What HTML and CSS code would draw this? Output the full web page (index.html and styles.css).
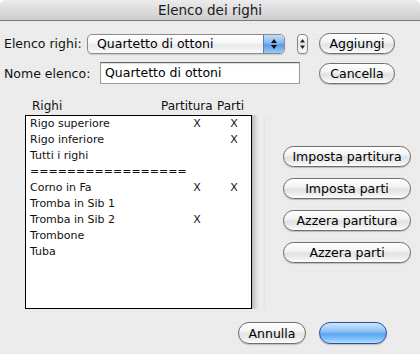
FILE: index.html
```html
<!DOCTYPE html>
<html>
<head>
<meta charset="utf-8">
<link rel="stylesheet" href="styles.css">
</head>
<body>
<div class="window">
  <div class="titlebar">Elenco dei righi</div>
  <div class="content">
    <div class="row row1">
      <span class="label label1">Elenco righi:</span>
      <div class="popup">
        <span class="popup-text">Quartetto di ottoni</span>
        <span class="popup-arrows">
          <svg width="8" height="12" viewBox="0 0 8 12"><path d="M4 1 L7 5 L1 5 Z M1 7 L7 7 L4 11 Z" fill="#111"/></svg>
        </span>
      </div>
      <div class="stepper">
        <svg width="7" height="14" viewBox="0 0 7 14"><path d="M3.5 2 L6 5.5 L1 5.5 Z M1 8.5 L6 8.5 L3.5 12 Z" fill="#222"/></svg>
      </div>
      <button class="btn btn-top">Aggiungi</button>
    </div>
    <div class="row row2">
      <span class="label label2">Nome elenco:</span>
      <div class="textfield">Quartetto di ottoni</div>
      <button class="btn btn-top">Cancella</button>
    </div>
    <div class="middle">
      <div class="listcol">
        <div class="listhead">
          <span class="h-name">Righi</span>
          <span class="h-part">Partitura</span>
          <span class="h-parti">Parti</span>
        </div>
        <div class="listwrap">
          <div class="listbox">
            <div class="lrow"><span>Rigo superiore</span><span class="c">X</span><span class="c c2">X</span></div>
            <div class="lrow"><span>Rigo inferiore</span><span class="c"></span><span class="c c2">X</span></div>
            <div class="lrow"><span>Tutti i righi</span><span class="c"></span><span class="c c2"></span></div>
            <div class="lrow"><span>=================</span><span class="c"></span><span class="c c2"></span></div>
            <div class="lrow"><span>Corno in Fa</span><span class="c">X</span><span class="c c2">X</span></div>
            <div class="lrow"><span>Tromba in Sib 1</span><span class="c"></span><span class="c c2"></span></div>
            <div class="lrow"><span>Tromba in Sib 2</span><span class="c">X</span><span class="c c2"></span></div>
            <div class="lrow"><span>Trombone</span><span class="c"></span><span class="c c2"></span></div>
            <div class="lrow"><span>Tuba</span><span class="c"></span><span class="c c2"></span></div>
          </div>
          <div class="track"></div>
        </div>
      </div>
      <div class="sidebtns">
        <button class="btn btn-side">Imposta partitura</button>
        <button class="btn btn-side">Imposta parti</button>
        <button class="btn btn-side">Azzera partitura</button>
        <button class="btn btn-side">Azzera parti</button>
      </div>
    </div>
    <div class="bottom">
      <button class="btn btn-bottom">Annulla</button>
      <button class="btn btn-bottom btn-default"></button>
    </div>
  </div>
</div>
</body>
</html>
```
FILE: styles.css
```css
html, body {
  margin: 0;
  padding: 0;
  background: #ffffff;
}
body {
  width: 420px;
  height: 354px;
  overflow: hidden;
  font-family: "DejaVu Sans", "Liberation Sans", sans-serif;
  color: #000;
}
.window {
  width: 420px;
  height: 354px;
  background-color: #ececec;
  background-image: repeating-linear-gradient(to bottom, #eeeeee 0, #eeeeee 1px, #e9e9e9 1px, #e9e9e9 2px);
  border-radius: 6px 6px 0 0;
  overflow: hidden;
}
.titlebar {
  height: 21px;
  box-sizing: border-box;
  border-bottom: 1px solid #7a7a7a;
  background: linear-gradient(to bottom, #ececec 0%, #dcdcdc 50%, #cdcdcd 100%);
  text-align: center;
  font-size: 13.5px;
  line-height: 21px;
  color: #1a1a1a;
}
.content {
  padding: 12px 0 0 4px;
}
.row {
  display: flex;
  align-items: center;
}
.label {
  font-size: 12.5px;
  color: #111;
  white-space: nowrap;
  flex: none;
}
.label1 { width: 83px; }
.label2 { width: 96px; }
.row1 {
  height: 21px;
}
.row2 {
  height: 22px;
  margin-top: 8px;
}
.popup {
  width: 198px;
  height: 20px;
  box-sizing: border-box;
  border: 1px solid #8c8c8c;
  border-radius: 5px;
  background: linear-gradient(to bottom, #ffffff 0%, #f6f6f6 45%, #e8e8e8 55%, #fafafa 100%);
  display: flex;
  align-items: center;
  overflow: hidden;
  box-shadow: 0 1px 1px rgba(0,0,0,0.15);
}
.popup-text {
  flex: 1;
  padding-left: 9px;
  font-size: 12.5px;
  line-height: 18px;
}
.popup-arrows {
  width: 20px;
  height: 18px;
  display: flex;
  align-items: center;
  justify-content: center;
  background: linear-gradient(to bottom, #c3dcf8 0%, #86b7ef 45%, #5a98e6 55%, #9ccaf6 100%);
  border-left: 1px solid #5a7fb5;
}
.stepper {
  margin-left: 12px;
  width: 11px;
  height: 20px;
  box-sizing: border-box;
  border: 1px solid #888;
  border-radius: 4px;
  background: linear-gradient(to bottom, #ffffff, #e6e6e6 50%, #f8f8f8);
  display: flex;
  align-items: center;
  justify-content: center;
  box-shadow: 0 1px 1px rgba(0,0,0,0.15);
}
.btn {
  font-family: "DejaVu Sans", "Liberation Sans", sans-serif;
  font-size: 12.5px;
  color: #000;
  padding: 0;
  box-sizing: border-box;
  border: 1px solid #6e6e6e;
  border-radius: 11px;
  background: linear-gradient(to bottom, #ffffff 0%, #f4f4f4 40%, #e2e2e2 55%, #eeeeee 80%, #fdfdfd 100%);
  box-shadow: 0 1px 1px rgba(0,0,0,0.2);
  text-align: center;
}
.btn-top {
  width: 76px;
  height: 21px;
}
.row1 .btn-top {
  margin-left: 11px;
}
.row2 .btn-top {
  margin-left: 19px;
}
.textfield {
  width: 200px;
  height: 22px;
  box-sizing: border-box;
  border: 1px solid #9a9a9a;
  border-top-color: #6a6a6a;
  background: #fff;
  font-size: 12.5px;
  line-height: 20px;
  padding-left: 4px;
  box-shadow: inset 0 1px 1px rgba(0,0,0,0.15);
}
.middle {
  display: flex;
  margin-top: 12px;
}
.listcol {
  margin-left: 21px;
  width: 242px;
}
.listhead {
  height: 19px;
  font-size: 12px;
  color: #111;
  display: grid;
  grid-template-columns: 136px 56px 40px;
  align-items: center;
}
.h-name { padding-left: 7px; }
.listwrap {
  display: flex;
}
.listbox {
  width: 227px;
  height: 194px;
  box-sizing: border-box;
  border: 1px solid #000;
  background: #fff;
}
.lrow {
  height: 16px;
  display: grid;
  grid-template-columns: 156px 30px 39px;
  align-items: center;
  font-size: 11px;
  line-height: 16px;
  color: #111;
}
.lrow span:first-child {
  padding-left: 4px;
  white-space: nowrap;
}
.c { text-align: center; }
.c2 { padding-left: 5px; }
.track {
  width: 13px;
  height: 194px;
  background: linear-gradient(to right, #b9b9b9 0, #d4d4d4 3px, #e8e8e8 6px, #f0f0f0 9px, #e4e4e4 13px);
}
.sidebtns {
  margin-left: 16px;
  margin-top: 50px;
  display: flex;
  flex-direction: column;
  gap: 11px;
}
.btn-side {
  width: 128px;
  height: 21px;
}
.bottom {
  display: flex;
  margin-top: 13px;
  padding-left: 234px;
  gap: 13px;
}
.btn-bottom {
  width: 68px;
  height: 22px;
}
.btn-default {
  border-color: #2b4f9e;
  background: linear-gradient(to bottom, #cfe6fd 0%, #8fc3f6 40%, #5aa6ef 55%, #7fc1fa 80%, #b9e0ff 100%);
}
```
